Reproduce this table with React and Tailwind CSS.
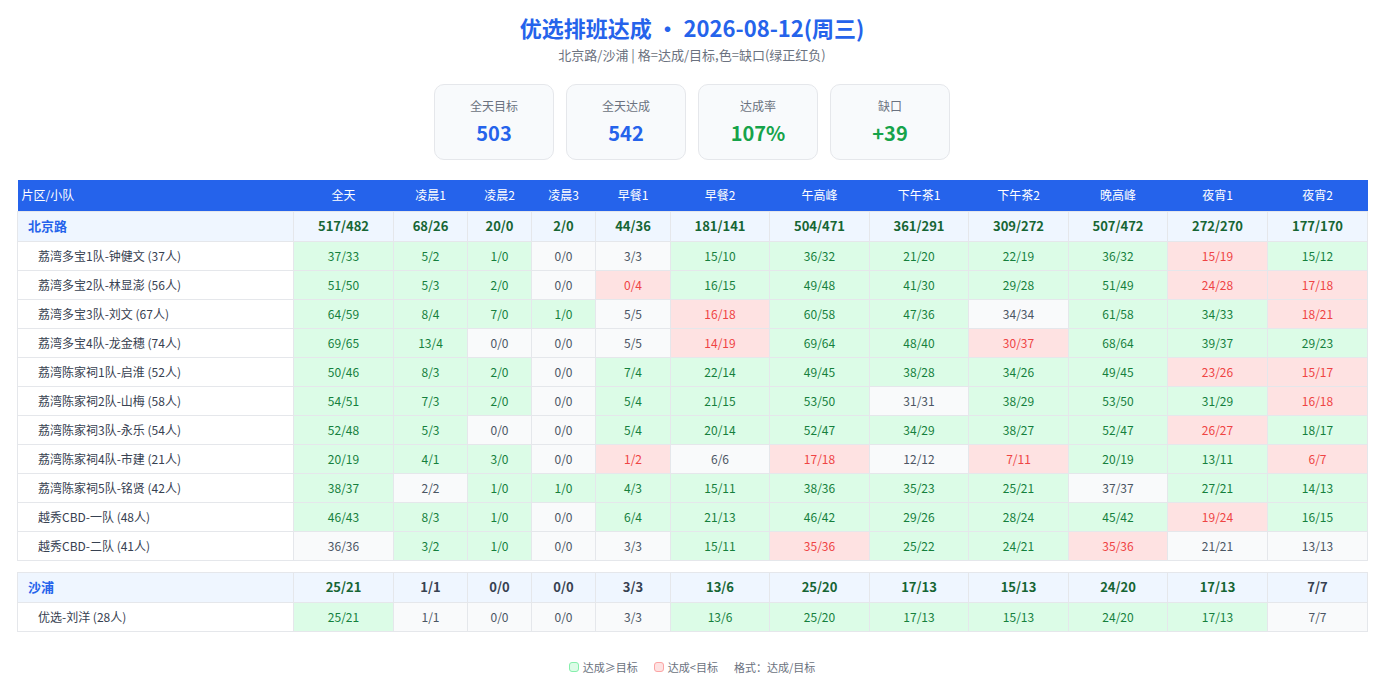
import React from "react";

const cols = ["全天", "凌晨1", "凌晨2", "凌晨3", "早餐1", "早餐2", "午高峰", "下午茶1", "下午茶2", "晚高峰", "夜宵1", "夜宵2"];
const widths = [276, 100, 74, 64, 64, 75, 99, 100, 99, 100, 99, 100, 100];

const groups = [
  {
    name: "北京路",
    total: "517/482 68/26 20/0 2/0 44/36 181/141 504/471 361/291 309/272 507/472 272/270 177/170",
    rows: [
      ["荔湾多宝1队-钟健文 (37人)", "37/33 5/2 1/0 0/0 3/3 15/10 36/32 21/20 22/19 36/32 15/19 15/12"],
      ["荔湾多宝2队-林显澎 (56人)", "51/50 5/3 2/0 0/0 0/4 16/15 49/48 41/30 29/28 51/49 24/28 17/18"],
      ["荔湾多宝3队-刘文 (67人)", "64/59 8/4 7/0 1/0 5/5 16/18 60/58 47/36 34/34 61/58 34/33 18/21"],
      ["荔湾多宝4队-龙金穗 (74人)", "69/65 13/4 0/0 0/0 5/5 14/19 69/64 48/40 30/37 68/64 39/37 29/23"],
      ["荔湾陈家祠1队-启淮 (52人)", "50/46 8/3 2/0 0/0 7/4 22/14 49/45 38/28 34/26 49/45 23/26 15/17"],
      ["荔湾陈家祠2队-山梅 (58人)", "54/51 7/3 2/0 0/0 5/4 21/15 53/50 31/31 38/29 53/50 31/29 16/18"],
      ["荔湾陈家祠3队-永乐 (54人)", "52/48 5/3 0/0 0/0 5/4 20/14 52/47 34/29 38/27 52/47 26/27 18/17"],
      ["荔湾陈家祠4队-市建 (21人)", "20/19 4/1 3/0 0/0 1/2 6/6 17/18 12/12 7/11 20/19 13/11 6/7"],
      ["荔湾陈家祠5队-铭贤 (42人)", "38/37 2/2 1/0 1/0 4/3 15/11 38/36 35/23 25/21 37/37 27/21 14/13"],
      ["越秀CBD-一队 (48人)", "46/43 8/3 1/0 0/0 6/4 21/13 46/42 29/26 28/24 45/42 19/24 16/15"],
      ["越秀CBD-二队 (41人)", "36/36 3/2 1/0 0/0 3/3 15/11 35/36 25/22 24/21 35/36 21/21 13/13"],
    ],
  },
  {
    name: "沙浦",
    total: "25/21 1/1 0/0 0/0 3/3 13/6 25/20 17/13 15/13 24/20 17/13 7/7",
    rows: [["优选-刘洋 (28人)", "25/21 1/1 0/0 0/0 3/3 13/6 25/20 17/13 15/13 24/20 17/13 7/7"]],
  },
];

const diff = (v) => {
  const [a, b] = v.split("/").map(Number);
  return a - b;
};

const cellClass = (v) => {
  const d = diff(v);
  if (d > 0) return "bg-[#dcfce7] text-[#15803d]";
  if (d < 0) return "bg-[#fee2e2] text-[#ef4444]";
  return "bg-[#f9fafb] text-[#4b5563]";
};

const totalClass = (v) => {
  const d = diff(v);
  if (d > 0) return "text-[#166534]";
  if (d < 0) return "text-[#dc2626]";
  return "text-[#374151]";
};

const cards = [
  { label: "全天目标", value: "503", color: "text-[#2563eb]" },
  { label: "全天达成", value: "542", color: "text-[#2563eb]" },
  { label: "达成率", value: "107%", color: "text-[#16a34a]" },
  { label: "缺口", value: "+39", color: "text-[#16a34a]" },
];

const Group = ({ group, last }) => (
  <>
    <tr className="h-[30px] bg-[#eff6ff]">
      <td className="border border-[#e5e7eb] pl-[10px] text-left text-[13px] font-bold text-[#2563eb]">{group.name}</td>
      {group.total.split(" ").map((v, i) => (
        <td key={i} className={`border border-[#e5e7eb] text-center text-[13px] font-bold ${totalClass(v)}`}>
          {v}
        </td>
      ))}
    </tr>
    {group.rows.map(([name, vals]) => (
      <tr key={name} className="h-[29px]">
        <td className="border border-[#e5e7eb] bg-white pl-5 text-left text-[12px] text-[#374151]">{name}</td>
        {vals.split(" ").map((v, i) => (
          <td key={i} className={`border border-[#e5e7eb] text-center text-[12px] ${cellClass(v)}`}>
            {v}
          </td>
        ))}
      </tr>
    ))}
    {!last && (
      <tr className="h-3">
        <td colSpan={13} className="border-0 bg-white p-0"></td>
      </tr>
    )}
  </>
);

export default function App() {
  return (
    <div className="min-h-screen bg-white pt-3 font-['Noto_Sans_CJK_SC','Noto_Sans',sans-serif]">
      <div className="mx-auto w-[1350px]">
        <h1 className="text-center text-[22px] font-bold leading-[30px] text-[#2563eb]">优选排班达成 · 2026-08-12(周三)</h1>
        <p className="mt-[3px] text-center text-[13px] leading-5 text-[#6b7280]">北京路/沙浦 | 格=达成/目标,色=缺口(绿正红负)</p>

        <div className="mt-[19px] flex justify-center gap-3">
          {cards.map((c) => (
            <div key={c.label} className="w-[120px] rounded-[10px] border border-[#e5e7eb] bg-[#f8fafc] py-3 text-center">
              <div className="text-[12px] leading-[18px] text-[#6b7280]">{c.label}</div>
              <div className={`mt-1 text-[20px] font-bold leading-[28px] ${c.color}`}>{c.value}</div>
            </div>
          ))}
        </div>

        <table className="mt-[20px] w-[1350px] table-fixed border-collapse">
          <colgroup>
            {widths.map((w, i) => (
              <col key={i} style={{ width: w }} />
            ))}
          </colgroup>
          <thead>
            <tr className="h-[31px] bg-[#2563eb] text-[12px] font-normal text-white">
              <th className="pl-1 text-left font-normal">片区/小队</th>
              {cols.map((c) => (
                <th key={c} className="text-center font-normal">
                  {c}
                </th>
              ))}
            </tr>
          </thead>
          <tbody>
            {groups.map((g, i) => (
              <Group key={g.name} group={g} last={i === groups.length - 1} />
            ))}
          </tbody>
        </table>

        <div className="mt-[26px] flex items-center justify-center gap-4 text-[11px] leading-[18px] text-[#6b7280]">
          <span className="flex items-center gap-1">
            <span className="inline-block h-[10px] w-[10px] rounded-[3px] border border-[#86efac] bg-[#dcfce7]"></span>
            达成≥目标
          </span>
          <span className="flex items-center gap-1">
            <span className="inline-block h-[10px] w-[10px] rounded-[3px] border border-[#fca5a5] bg-[#fee2e2]"></span>
            达成&lt;目标
          </span>
          <span>格式：达成/目标</span>
        </div>
      </div>
    </div>
  );
}
